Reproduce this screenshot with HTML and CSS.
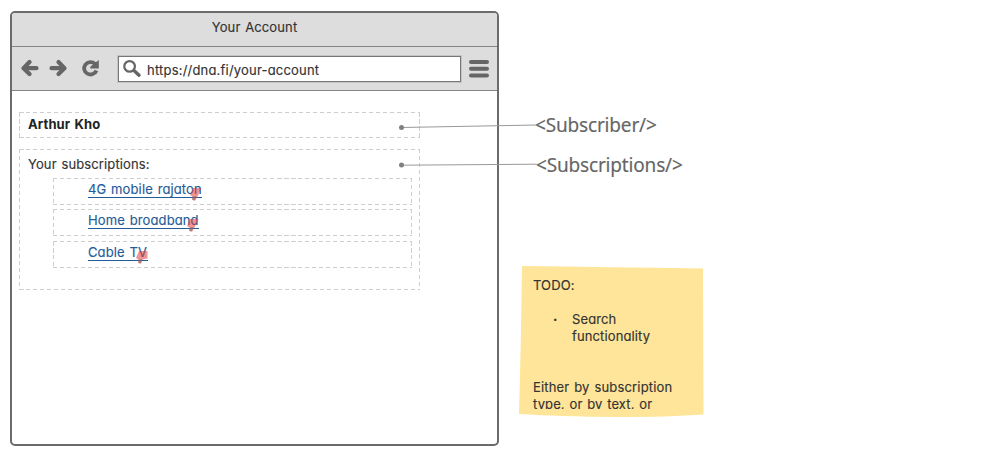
FILE: index.html
```html
<!DOCTYPE html>
<html lang="en">
<head>
<meta charset="utf-8">
<title>Your Account</title>
<link rel="stylesheet" href="styles.css">
</head>
<body>
<main class="board">
  <section class="window">
    <header class="titlebar"><span class="title">Your Account</span></header>
    <div class="toolbar">
      <svg class="nav" width="80" height="20" viewBox="0 0 80 20" fill="none" stroke="#666" stroke-width="4.200" stroke-linecap="round" stroke-linejoin="round">
        <path d="M8.500 4 2.500 10.200 8.500 16M3 10.200H15.500"/>
        <path d="M37.500 4 43.500 10.200 37.500 16M43 10.200H30.500"/>
        <path stroke-width="3.800" stroke-linecap="butt" d="M75.500 12.500A6.400 6.200 0 1 1 74 5.800"/>
        <path fill="#666" stroke="none" d="M77.800 2V10.500H69.300V8.700Z"/>
      </svg>
      <div class="address">
        <svg width="18" height="18" viewBox="0 0 18 18" fill="none" stroke="#666">
          <circle cx="6.600" cy="6.400" r="5.300" stroke-width="2.200"/>
          <path d="M11.500 11 16 15.200" stroke-width="3.400" stroke-linecap="round"/>
        </svg>
        <span class="url">https://dna.fi/your-account</span>
      </div>
      <svg class="menu" width="20" height="18" viewBox="0 0 20 18" stroke="#666" stroke-width="4" stroke-linecap="round">
        <path d="M2 2H18M2 8.800H18M2 15.500H18"/>
      </svg>
    </div>
    <div class="page">
      <div class="subscriber dashed"><span class="name">Arthur Kho</span></div>
      <div class="subscriptions dashed">
        <div class="heading"><span class="label">Your subscriptions:</span></div>
        <ul class="list">
          <li class="item dashed"><a class="link mobile">4G mobile rajaton<svg class="marker" width="12" height="14" viewBox="0 0 12 14"><path d="M3 0H11.500L7.500 8.500 5 12.500 2 12 2.500 8.500 0 7Z"/><path class="tip" d="M2.500 8.500 6.500 8 5 12.500 2.500 12Z"/></svg></a></li>
          <li class="item dashed"><a class="link home">Home broadband<svg class="marker" width="12" height="14" viewBox="0 0 12 14"><path d="M3 0H11.500L7.500 8.500 5 12.500 2 12 2.500 8.500 0 7Z"/><path class="tip" d="M2.500 8.500 6.500 8 5 12.500 2.500 12Z"/></svg></a></li>
          <li class="item dashed"><a class="link cable">Cable TV<svg class="marker" width="12" height="14" viewBox="0 0 12 14"><path d="M3 0H11.500V7.500L6.500 8.500 5 12.500 2 12 2.500 8.500 0 7Z"/><path class="tip" d="M2.500 8.500 6.500 8 5 12.500 2.500 12Z"/></svg></a></li>
        </ul>
      </div>
    </div>
  </section>
  <aside class="notes">
    <div class="callout first">&lt;Subscriber/&gt;</div>
    <div class="callout second">&lt;Subscriptions/&gt;</div>
    <div class="sticky">
      <svg class="paper" width="188" height="154" viewBox="0 0 188 154"><path d="M3 1Q90 2 184 3.500L184.500 149.500Q150 152 98 152Q40 151.500 0 149Q2 80 3 1Z"/></svg>
      <div class="sticky-text">
        <p class="todo">TODO:</p>
        <ul class="tasks"><li><span class="search">Search</span><br><span class="func">functionality</span></li></ul>
        <p class="either"><span class="by">Either by subscription</span><br><span class="type">type, or by text, or</span></p>
      </div>
    </div>
  </aside>
  <svg class="leaders" width="150" height="60" viewBox="0 0 150 60">
    <path d="M6.500 17.500 142 15M6.500 55.200 142 54.200"/>
    <circle cx="6.500" cy="17.500" r="2.500"/><circle cx="6.500" cy="55" r="2.500"/>
  </svg>
</main>
</body>
</html>
```
FILE: styles.css
```css
* { box-sizing: border-box; }
body { margin: 0; background: #fff; }
.board {
  position: relative;
  display: flex;
  width: 1000px;
  height: 459px;
  padding: 11px 0 0 10px;
  overflow: hidden;
  color: #333;
  font: 400 13px/17px Inter, "Liberation Sans", sans-serif;
  font-feature-settings: "cv11" 1;
  letter-spacing: .12px;
  word-spacing: 1px;
  -webkit-text-stroke: .15px currentColor;
  white-space: nowrap;
}
.window {
  display: flex;
  flex-direction: column;
  width: 489px;
  height: 435px;
  border: 2px solid #6b6b6b;
  border-radius: 5px;
  overflow: hidden;
}
.titlebar {
  height: 34px;
  padding-top: 6px;
  background: #ddd;
  border-bottom: 1px solid #858585;
  text-align: center;
}
.toolbar {
  display: flex;
  align-items: flex-start;
  height: 44px;
  padding: 9px 8px 0 9px;
  background: #ddd;
  border-bottom: 1px solid #858585;
}
.nav { margin: 2px 17px 0 0; }
.address {
  display: flex;
  width: 343px;
  height: 26px;
  padding: 3px 4px;
  background: #fff;
  border: 1px solid #777;
  outline: 1px solid #c4c4c4;
}
.url { margin: 2px 0 0 6px; letter-spacing: .2px; }
.menu { margin: 4px 0 0 8px; }
.page { padding: 21px 0 0 7px; }
.dashed {
  --c: #cecece;
  background:
    repeating-linear-gradient(90deg, var(--c) 0 4.500px, transparent 4.500px 7px) top / 100% 1px,
    repeating-linear-gradient(90deg, var(--c) 0 4.500px, transparent 4.500px 7px) bottom / 100% 1px,
    repeating-linear-gradient(180deg, var(--c) 0 4.500px, transparent 4.500px 7px) left / 1px 100%,
    repeating-linear-gradient(180deg, var(--c) 0 4.500px, transparent 4.500px 7px) right / 1px 100%;
  background-repeat: no-repeat;
}
.subscriber { width: 401px; height: 26px; padding: 4px 9px; }
.name { font-weight: 700; color: #222; -webkit-text-stroke: 0; }
.subscriptions { width: 401px; height: 141px; margin-top: 11px; padding: 7px 9px 0; }
.heading { height: 22px; }
.list { margin: 0 0 0 25px; padding: 0; list-style: none; }
.item { width: 359px; height: 27px; padding: 3px 0 0 35px; margin-bottom: 4px; }
.item:nth-child(2) { margin-bottom: 5px; }
.link {
  display: inline-block;
  position: relative;
  height: 17px;
  color: #1f5c99;
  border-bottom: 1px solid #1f5c99;
}
.cable { padding-right: 1px; }
.marker { position: absolute; right: 0; top: 7px; fill: rgba(225, 60, 60, .55); }
.tip { fill: rgba(110, 110, 110, .5); }
.notes { width: 200px; margin-left: 20px; }
.callout {
  font: 19px/24px "Noto Sans", sans-serif;
  letter-spacing: -.17px;
  color: #666;
}
.first { margin: 102px 0 0 16px; }
.second { margin: 16px 0 0 17px; }
.sticky { position: relative; width: 188px; height: 154px; margin-top: 88px; }
.paper { position: absolute; inset: 0; fill: #ffe599; }
.sticky-text { position: relative; height: 144px; padding: 12px 0 0 14px; overflow: hidden; }
.sticky p { margin: 0; }
.by { letter-spacing: .17px; }
.tasks { position: relative; margin: 17px 0 34px; padding: 0 0 0 39px; list-style: none; }
.tasks li::before { content: "·"; position: absolute; left: 20px; font-weight: 700; }
.leaders { position: absolute; left: 395px; top: 110px; fill: #808080; stroke: none; }
.leaders path { fill: none; stroke: #999; stroke-width: 1; }
```
